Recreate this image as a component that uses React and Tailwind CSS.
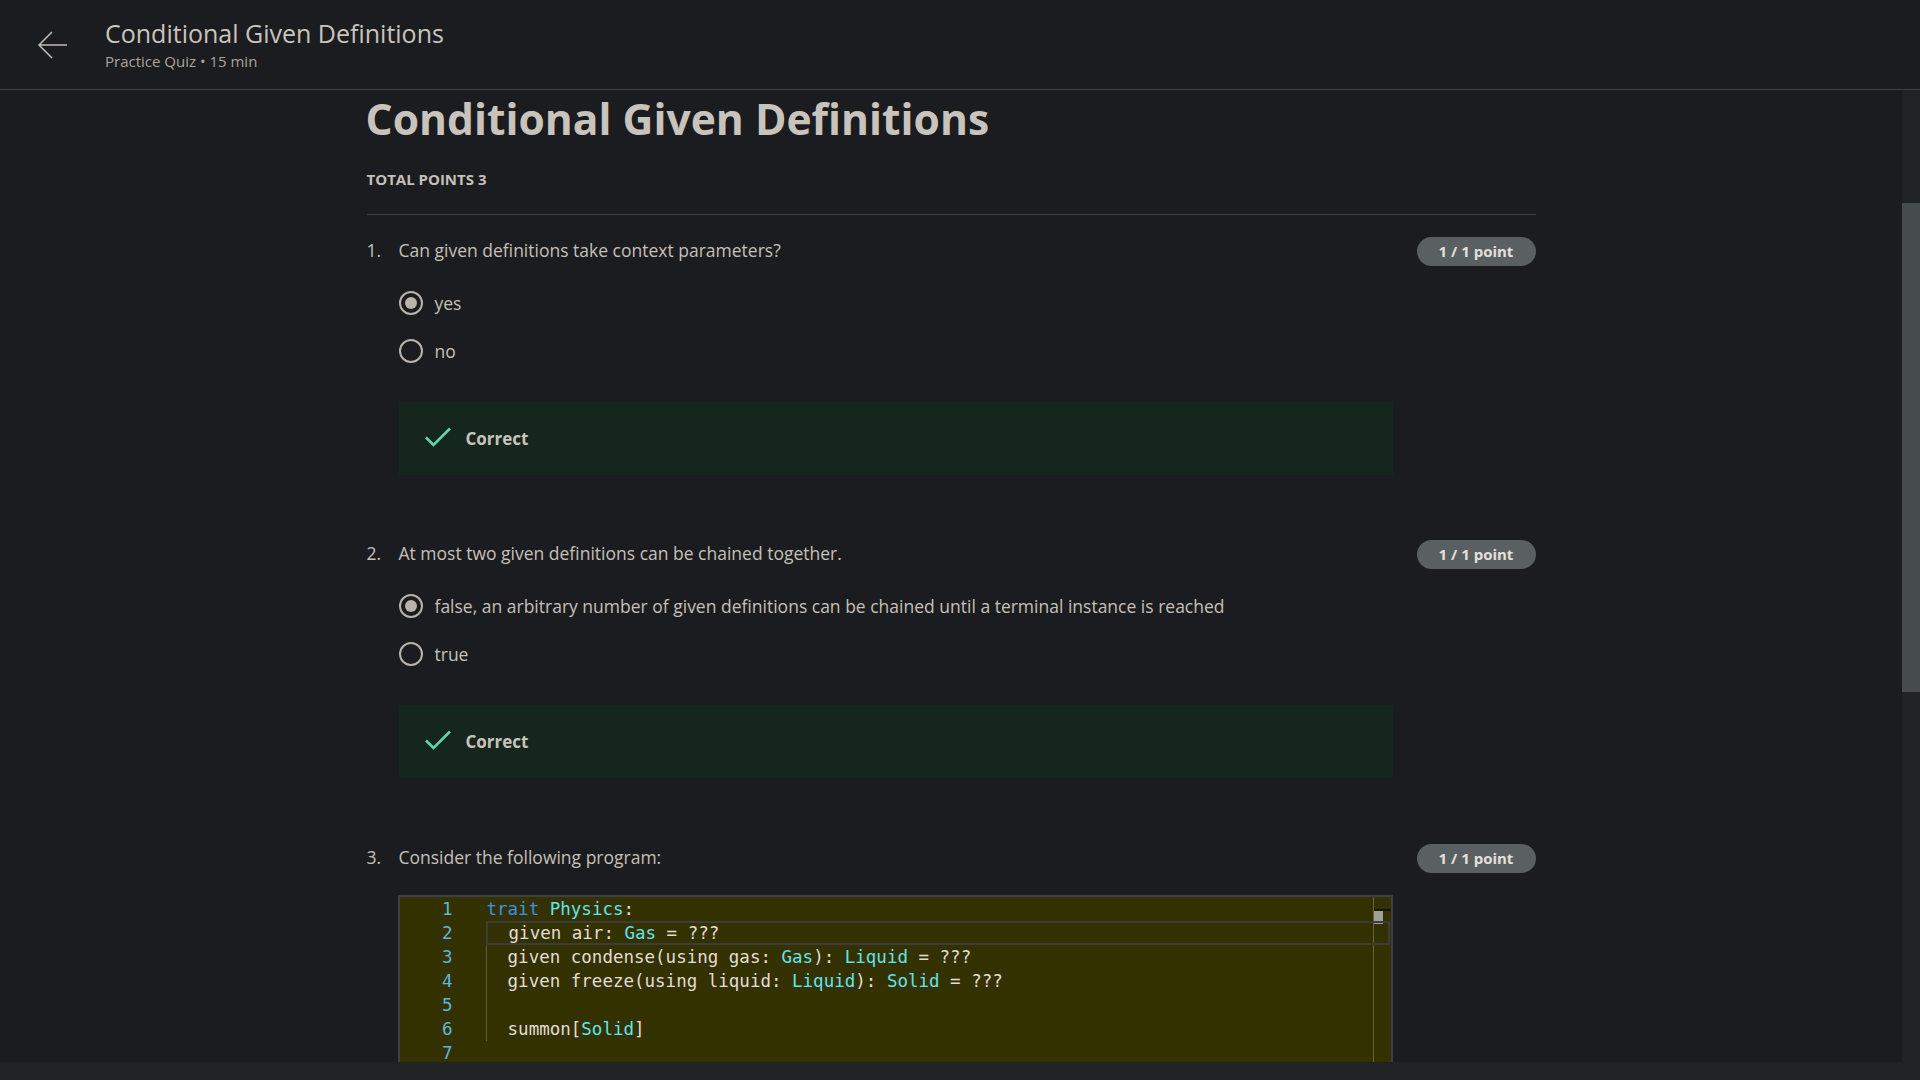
import { useState } from "react";

const code = [
  [["kw", "trait"], ["", " "], ["ty", "Physics"], ["", ":"]],
  [["", "  given air: "], ["ty", "Gas"], ["", " = ???"]],
  [["", "  given condense(using gas: "], ["ty", "Gas"], ["", "): "], ["ty", "Liquid"], ["", " = ???"]],
  [["", "  given freeze(using liquid: "], ["ty", "Liquid"], ["", "): "], ["ty", "Solid"], ["", " = ???"]],
  [["", ""]],
  [["", "  summon["], ["ty", "Solid"], ["", "]"]],
  [["", ""]],
];

const tokenColor = { kw: "text-[#3f8fe6]", ty: "text-[#62e3ea]", "": "text-[#e2ddd4]" };

function Radio({ checked }) {
  return (
    <span className="flex h-6 w-6 shrink-0 items-center justify-center rounded-full border-2 border-[#b9b3aa]">
      {checked && <span className="h-3 w-3 rounded-full bg-[#b9b3aa]" />}
    </span>
  );
}

function Badge() {
  return (
    <span className="flex h-[29px] w-[119px] shrink-0 items-center justify-center rounded-full bg-[#5a5f62] text-[15px] font-bold text-[#e3e0db]">
      1 / 1 point
    </span>
  );
}

function Correct() {
  return (
    <div className="mt-[27px] flex h-[73px] w-[994px] items-center bg-[#15261f] pl-[25px]">
      <svg className="mt-[-4px]" width="28" height="22" viewBox="0 0 28 22" fill="none">
        <path d="M2 11.5 L9.5 19 L26 2.5" stroke="#5fd6a7" strokeWidth="2.6" />
      </svg>
      <span className="ml-[14px] text-[17px] font-bold text-[#c9c3b9]">Correct</span>
    </div>
  );
}

function Question({ num, text, gap, children }) {
  return (
    <section className={gap}>
      <div className="flex items-start justify-between">
        <div className="flex text-[17.5px] leading-[26px] text-[#c5c0b8]">
          <span className="w-[32px]">{num}.</span>
          <span>{text}</span>
        </div>
        <Badge />
      </div>
      <div className="ml-[32px]">{children}</div>
    </section>
  );
}

function Options({ items }) {
  return (
    <div className="mt-[13px]">
      {items.map((o) => (
        <label key={o.label} className="flex h-[48px] items-center gap-[12px] text-[17.5px] text-[#c5c0b8]">
          <Radio checked={o.checked} />
          <span>{o.label}</span>
        </label>
      ))}
    </div>
  );
}

export default function App() {
  const [answers] = useState({ q1: "yes", q2: "false" });

  return (
    <div className="flex h-screen w-full flex-col overflow-hidden bg-[#1b1c1f] font-['Open_Sans',sans-serif]">
      <header className="flex h-[90px] shrink-0 items-center border-b border-[#3f4043]">
        <svg className="ml-[37px]" width="31" height="30" viewBox="0 0 31 30" fill="none">
          <path d="M30 15 H2 M15 2 L2 15 L15 28" stroke="#c2bdb5" strokeWidth="1.5" />
        </svg>
        <div className="ml-[37px] mt-[-2px]">
          <h1 className="text-[25px] leading-[32px] text-[#c9c4bc]">Conditional Given Definitions</h1>
          <p className="mt-[2px] text-[15px] leading-[20px] text-[#aaa49b]">Practice Quiz • 15 min</p>
        </div>
      </header>

      <div className="flex min-h-0 flex-1">
        <main className="min-w-0 flex-1 overflow-hidden">
          <div className="mx-auto w-[1169px]">
            <h2 className="ml-[-1px] text-[42.6px] font-bold leading-[56px] text-[#c8c3bb]">Conditional Given Definitions</h2>
            <p className="mt-[23px] text-[15px] font-bold leading-[20px] text-[#c5c0b8]">TOTAL POINTS 3</p>
            <div className="mt-[25px] h-px bg-[#3c3e41]" />

            <Question num={1} text="Can given definitions take context parameters?" gap="mt-[22px]">
              <Options
                items={[
                  { label: "yes", checked: answers.q1 === "yes" },
                  { label: "no", checked: answers.q1 === "no" },
                ]}
              />
              <Correct />
            </Question>

            <Question num={2} text="At most two given definitions can be chained together." gap="mt-[65px]">
              <Options
                items={[
                  {
                    label: "false, an arbitrary number of given definitions can be chained until a terminal instance is reached",
                    checked: answers.q2 === "false",
                  },
                  { label: "true", checked: answers.q2 === "true" },
                ]}
              />
              <Correct />
            </Question>

            <Question num={3} text="Consider the following program:" gap="mt-[66px]">
              <div className="relative ml-[-1px] mt-[22px] h-[200px] w-[995px] border-x-2 border-t-2 border-[#3e3f41] bg-[#343100] font-['DejaVu_Sans_Mono',monospace] text-[17.5px] leading-[24px]">
                <div className="absolute right-0 top-0 h-full w-[18px] border-l border-[#66643a]">
                  <div className="mt-[12px] h-[2px] bg-[#16160a]" />
                  <div className="h-[13px] w-[9px] bg-[#a09f98]" />
                </div>
                {code.map((line, i) => (
                  <div key={i} className="relative flex h-[24px]">
                    <span className="w-[53px] shrink-0 text-right text-[#5db6de]">{i + 1}</span>
                    <span
                      className={
                        "ml-[33px] flex-1 whitespace-pre " +
                        (i === 1 ? "z-10 mr-[1px] border-2 border-[#3c3c38] leading-[20px]" : "border-l border-transparent") +
                        (i > 1 && i < 6 ? " border-l-[#5e5b40]" : "")
                      }
                    >
                      {line.map(([t, s], j) => (
                        <span key={j} className={tokenColor[t]}>
                          {s}
                        </span>
                      ))}
                    </span>
                  </div>
                ))}
              </div>
            </Question>
          </div>
        </main>
        <div className="relative w-[18px] shrink-0 bg-[#202324]">
          <div className="absolute left-0 top-[113px] h-[489px] w-full bg-[#464b4d]" />
        </div>
      </div>
      <div className="h-[18px] shrink-0 bg-[#202324]" />
    </div>
  );
}
